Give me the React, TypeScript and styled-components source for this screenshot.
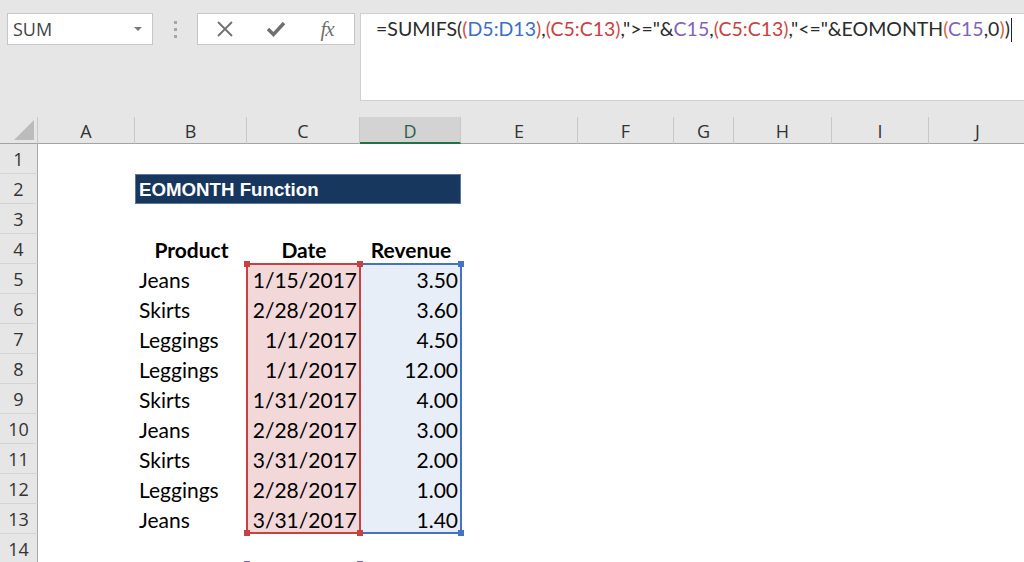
import React from "react";
import styled, { createGlobalStyle } from "styled-components";

const GlobalStyle = createGlobalStyle`
  html, body {
    margin: 0;
    padding: 0;
    background: #fff;
    overflow: hidden;
  }
  body {
    width: 1024px;
    height: 562px;
  }
`;

const COLUMNS = [
  { name: "A", width: 97 },
  { name: "B", width: 112 },
  { name: "C", width: 113 },
  { name: "D", width: 101 },
  { name: "E", width: 117 },
  { name: "F", width: 96 },
  { name: "G", width: 60 },
  { name: "H", width: 98 },
  { name: "I", width: 97 },
  { name: "J", width: 98 },
];

const ROW_COUNT = 15;

const DATA = [
  ["Jeans", "1/15/2017", "3.50"],
  ["Skirts", "2/28/2017", "3.60"],
  ["Leggings", "1/1/2017", "4.50"],
  ["Leggings", "1/1/2017", "12.00"],
  ["Skirts", "1/31/2017", "4.00"],
  ["Jeans", "2/28/2017", "3.00"],
  ["Skirts", "3/31/2017", "2.00"],
  ["Leggings", "2/28/2017", "1.00"],
  ["Jeans", "3/31/2017", "1.40"],
];

const REF = {
  red: "#c8403f",
  blue: "#4472c4",
  purple: "#8064b8",
};

const Page = styled.div`
  width: 1024px;
  height: 562px;
  overflow: hidden;
  display: flex;
  flex-direction: column;
`;

/* ---------- formula toolbar ---------- */

const Toolbar = styled.div`
  height: 117px;
  flex: none;
  background: #e6e6e6;
  display: flex;
  align-items: flex-start;
  padding: 13px 0 0 7px;
  box-sizing: border-box;
`;

const NameBox = styled.div`
  flex: none;
  width: 146px;
  height: 32px;
  box-sizing: border-box;
  background: #fff;
  border: 1px solid #c6c6c6;
  display: flex;
  align-items: center;
  justify-content: space-between;
  padding: 0 10px 0 5px;
  font-family: "Open Sans", sans-serif;
  font-size: 18px;
  color: #444;
`;

const Caret = styled.span`
  width: 0;
  height: 0;
  border-left: 4px solid transparent;
  border-right: 4px solid transparent;
  border-top: 4px solid #7a7a7a;
`;

const Grip = styled.div`
  flex: none;
  width: 44px;
  height: 32px;
  display: flex;
  flex-direction: column;
  align-items: center;
  justify-content: center;
  gap: 4px;
`;

const GripDot = styled.span`
  width: 3px;
  height: 3px;
  background: #a6a6a6;
`;

const ButtonBox = styled.div`
  flex: none;
  width: 158px;
  height: 32px;
  box-sizing: border-box;
  background: #fff;
  border: 1px solid #c6c6c6;
  display: flex;
  align-items: center;
  justify-content: space-between;
  padding: 0 12px 0 12px;
`;

const IconSlot = styled.span`
  width: 30px;
  display: flex;
  align-items: center;
  justify-content: center;
  color: #6f6f6f;
`;

const Fx = styled.span`
  font-family: "Liberation Serif", serif;
  font-style: italic;
  font-size: 21px;
  color: #707070;
  letter-spacing: -1px;
`;

const FormulaBar = styled.div`
  margin-left: 5px;
  flex: 1;
  min-width: 0;
  overflow: hidden;
  height: 88px;
  box-sizing: border-box;
  background: #fff;
  border: 1px solid #cfcfcf;
  border-right: none;
  padding: 3px 0 0 15px;
  font-family: "Lato", sans-serif;
  font-size: 19.5px;
  color: #2b2b2b;
  white-space: nowrap;
  display: flex;
  align-items: flex-start;
`;

const Token = styled.span<{ $color?: string }>`
  color: ${(p) => p.$color ?? "#2b2b2b"};
`;

const TextCursor = styled.span`
  display: inline-block;
  width: 1px;
  height: 24px;
  background: #222;
  margin-left: 1px;
  margin-top: 1px;
`;

/* ---------- sheet ---------- */

const Sheet = styled.div`
  flex: none;
  display: grid;
  grid-template-columns: 38px ${COLUMNS.map((c) => `${c.width}px`).join(" ")};
  grid-template-rows: 27px repeat(${ROW_COUNT}, 30px);
  background: #fff;
`;

const Corner = styled.div`
  grid-row: 1;
  grid-column: 1;
  background: #e6e6e6;
  border-right: 1px solid #c8c8c8;
  border-bottom: 1px solid #a3a3a3;
  display: flex;
  align-items: flex-end;
  justify-content: flex-end;
  padding: 0 3px 3px 0;
`;

const CornerTriangle = styled.span`
  width: 0;
  height: 0;
  border-left: 20px solid transparent;
  border-bottom: 20px solid #bcbcbc;
`;

const ColHeader = styled.div<{ $col: number; $active?: boolean }>`
  grid-row: 1;
  grid-column: ${(p) => p.$col};
  background: ${(p) => (p.$active ? "#d3d3d3" : "#e6e6e6")};
  border-right: 1px solid #c8c8c8;
  border-bottom: ${(p) => (p.$active ? "2px solid #217346" : "1px solid #a3a3a3")};
  display: flex;
  align-items: center;
  justify-content: center;
  font-family: "Open Sans", sans-serif;
  font-size: 18px;
  color: ${(p) => (p.$active ? "#2a5f46" : "#333")};
  padding-top: 2px;
`;

const RowHeader = styled.div<{ $row: number }>`
  grid-row: ${(p) => p.$row};
  grid-column: 1;
  background: #e6e6e6;
  border-right: 1px solid #a8a8a8;
  border-bottom: 1px solid #d4d4d4;
  display: flex;
  align-items: center;
  justify-content: center;
  font-family: "Open Sans", sans-serif;
  font-size: 18px;
  color: #333;
`;

const Cell = styled.div<{
  $row: number;
  $col: number;
  $align?: "left" | "right" | "center";
  $bold?: boolean;
}>`
  grid-row: ${(p) => p.$row};
  grid-column: ${(p) => p.$col};
  position: relative;
  display: flex;
  align-items: center;
  justify-content: ${(p) =>
    p.$align === "right" ? "flex-end" : p.$align === "center" ? "center" : "flex-start"};
  padding: 0 3px 0 4px;
  font-family: "Lato", sans-serif;
  font-size: 21px;
  font-weight: ${(p) => (p.$bold ? 700 : 400)};
  color: #000;
  white-space: nowrap;
`;

const TitleCell = styled.div`
  grid-row: 3;
  grid-column: 3 / span 3;
  background: #17375e;
  border: 1px solid #5d7796;
  display: flex;
  align-items: center;
  padding: 2px 3px 0;
  font-family: "Liberation Sans", Arial, sans-serif;
  font-weight: 700;
  font-size: 18.7px;
  color: #fff;
`;

const RangeBox = styled.div<{ $row: number; $col: number; $rows: number; $color: string; $fill?: string }>`
  grid-row: ${(p) => `${p.$row} / span ${p.$rows}`};
  grid-column: ${(p) => p.$col};
  margin: -1px -1px 0 -1px;
  border: 2px solid ${(p) => p.$color};
  background: ${(p) => p.$fill ?? "transparent"};
  position: relative;
`;

const Handle = styled.span<{ $color: string; $v: "top" | "bottom"; $h: "left" | "right" }>`
  position: absolute;
  width: 6px;
  height: 6px;
  background: ${(p) => p.$color};
  ${(p) => p.$v}: -4px;
  ${(p) => p.$h}: -4px;
`;

const XIcon = () => (
  <svg width="18" height="18" viewBox="0 0 18 18">
    <path d="M2 2 L16 16 M16 2 L2 16" stroke="currentColor" strokeWidth="1.8" fill="none" />
  </svg>
);

const CheckIcon = () => (
  <svg width="20" height="18" viewBox="0 0 20 18">
    <path d="M2 9 L7.5 14.5 L18 3" stroke="currentColor" strokeWidth="3.4" fill="none" />
  </svg>
);

const Handles = ({ color }: { color: string }) => (
  <>
    <Handle $color={color} $v="top" $h="left" />
    <Handle $color={color} $v="top" $h="right" />
    <Handle $color={color} $v="bottom" $h="left" />
    <Handle $color={color} $v="bottom" $h="right" />
  </>
);

const FORMULA: [string, string?][] = [
  ["=SUMIFS("],
  ["(", "#d0504a"],
  ["D5:D13", "#3b6fc4"],
  [")", "#d0504a"],
  [","],
  ["(", "#d0504a"],
  ["C5:C13", "#c8413f"],
  [")", "#d0504a"],
  [',">="&'],
  ["C15", "#8262b8"],
  [","],
  ["(", "#d0504a"],
  ["C5:C13", "#c8413f"],
  [")", "#d0504a"],
  [',"<="&EOMONTH'],
  ["(", "#d9663e"],
  ["C15", "#8262b8"],
  [",0"],
  [")", "#d9663e"],
  [")"],
];

export default function App() {
  const firstData = 6; // grid row for sheet row 5
  return (
    <Page>
      <GlobalStyle />
      <Toolbar>
        <NameBox>
          SUM
          <Caret />
        </NameBox>
        <Grip>
          <GripDot />
          <GripDot />
          <GripDot />
        </Grip>
        <ButtonBox>
          <IconSlot>
            <XIcon />
          </IconSlot>
          <IconSlot>
            <CheckIcon />
          </IconSlot>
          <IconSlot>
            <Fx>fx</Fx>
          </IconSlot>
        </ButtonBox>
        <FormulaBar>
          <span>
            {FORMULA.map(([text, color], i) => (
              <Token key={i} $color={color}>
                {text}
              </Token>
            ))}
          </span>
          <TextCursor />
        </FormulaBar>
      </Toolbar>

      <Sheet>
        <Corner>
          <CornerTriangle />
        </Corner>
        {COLUMNS.map((c, i) => (
          <ColHeader key={c.name} $col={i + 2} $active={c.name === "D"}>
            {c.name}
          </ColHeader>
        ))}
        {Array.from({ length: ROW_COUNT }, (_, i) => (
          <RowHeader key={i} $row={i + 2}>
            {i + 1}
          </RowHeader>
        ))}

        <RangeBox $row={firstData} $col={5} $rows={9} $color={REF.blue} $fill="#e8eef8">
          <Handles color={REF.blue} />
        </RangeBox>
        <RangeBox $row={firstData} $col={4} $rows={9} $color={REF.red} $fill="#f3d8da">
          <Handles color={REF.red} />
        </RangeBox>
        <RangeBox $row={16} $col={4} $rows={1} $color={REF.purple}>
          <Handles color={REF.purple} />
        </RangeBox>

        <TitleCell>EOMONTH Function</TitleCell>

        <Cell $row={5} $col={3} $align="center" $bold>
          Product
        </Cell>
        <Cell $row={5} $col={4} $align="center" $bold>
          Date
        </Cell>
        <Cell $row={5} $col={5} $align="center" $bold>
          Revenue
        </Cell>

        {DATA.map(([product, date, revenue], i) => (
          <React.Fragment key={i}>
            <Cell $row={firstData + i} $col={3}>
              {product}
            </Cell>
            <Cell $row={firstData + i} $col={4} $align="right">
              {date}
            </Cell>
            <Cell $row={firstData + i} $col={5} $align="right">
              {revenue}
            </Cell>
          </React.Fragment>
        ))}
      </Sheet>
    </Page>
  );
}
